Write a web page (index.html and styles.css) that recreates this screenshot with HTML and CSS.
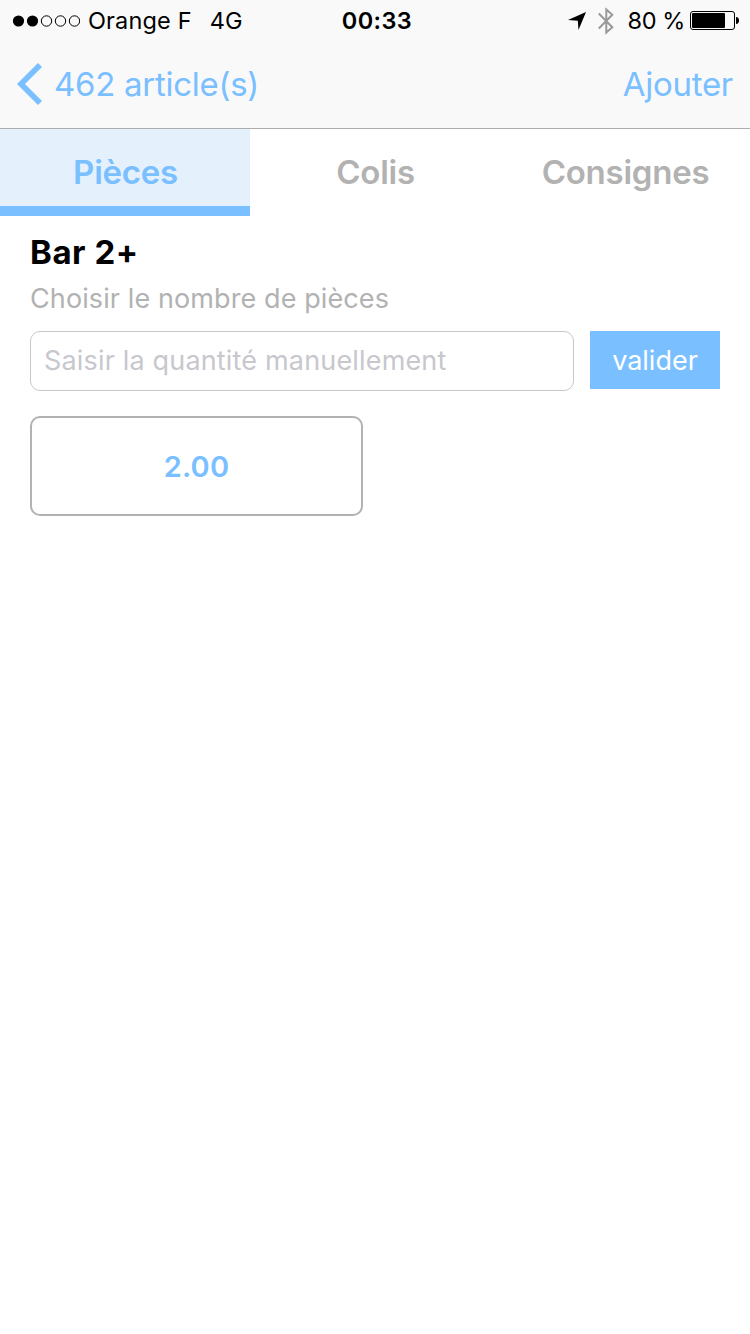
FILE: index.html
```html
<!DOCTYPE html>
<html lang="fr">
<head>
    <meta charset="UTF-8">
    <meta name="viewport" content="width=device-width, initial-scale=1.0">
    <title>Bar 2+</title>
    <link rel="stylesheet" href="styles.css">
</head>
<body>
    <header>
        <div class="status">
            <div class="status-left">
                <svg class="signal" width="68" height="12" viewBox="0 0 68 12">
                    <circle cx="6.5" cy="6" r="5.6"/>
                    <circle cx="20.5" cy="6" r="5.6"/>
                    <g fill="none" stroke="#000" stroke-width="1">
                        <circle cx="34.5" cy="6" r="5.2"/>
                        <circle cx="48.5" cy="6" r="5.2"/>
                        <circle cx="62.5" cy="6" r="5.2"/>
                    </g>
                </svg>
                <span class="operateur">Orange F</span>
                <span class="reseau">4G</span>
            </div>
            <div class="heure">00:33</div>
            <div class="status-right">
                <svg class="location" width="18" height="18" viewBox="0 0 18 18">
                    <path d="M18 0L10.5 18L9.8 8.8L0 8Z"/>
                </svg>
                <svg class="bluetooth" width="16" height="28" viewBox="0 0 16 28">
                    <path d="M0.8 6.5L14.3 20.3L8.3 25.5V2.5L14.3 7.7L0.8 21.5" fill="none" stroke="#999" stroke-width="2"/>
                </svg>
                <span class="pourcentage">80 %</span>
                <svg class="batterie" width="49" height="19" viewBox="0 0 49 19">
                    <rect x="0.5" y="0.5" width="44" height="18" rx="2.5" fill="none" stroke="#000"/>
                    <rect x="2" y="2" width="33" height="15" rx="1"/>
                    <path d="M46 6C48 6 49 7.5 49 9.5S48 13 46 13Z"/>
                </svg>
            </div>
        </div>

        <nav>
            <a href="#" class="retour">
                <svg width="26" height="42" viewBox="0 0 26 42">
                    <path d="M21 0L25 4L8 21L25 38L21 42L0 21Z" fill="#7abfff"/>
                </svg>
                <span>462 article(s)</span>
            </a>
            <a href="#" class="ajouter">Ajouter</a>
        </nav>
    </header>

    <div class="onglets">
        <a href="#" class="onglet actif">Pièces</a>
        <a href="#" class="onglet">Colis</a>
        <a href="#" class="onglet">Consignes</a>
    </div>

    <section>
        <h1>Bar 2+</h1>
        <p>Choisir le nombre de pièces</p>

        <form class="saisie">
            <input type="text" name="quantite" placeholder="Saisir la quantité manuellement">
            <button type="submit">valider</button>
        </form>

        <div class="choix">2.00</div>
    </section>
</body>
</html>
```

FILE: styles.css
```css
body {
    font-family: Inter, "Liberation Sans", sans-serif;
    margin: 0;
    background-color: #fff;
    color: #000;
    min-height: 100vh;
}

a {
    color: #7abfff;
    text-decoration: none;
}

svg {
    flex: none;
}

span {
    white-space: nowrap;
}

header {
    height: 128px;
    background-color: #f9f9f9;
    border-bottom: 1px solid #adadad;
}

/* Barre de statut */
.status {
    display: grid;
    grid-template-columns: 1fr auto 1fr;
    align-items: center;
    height: 41px;
    padding: 0 11px 0 12px;
    font-size: 23.5px;
    line-height: 41px;
}

.status-left,
.status-right {
    display: flex;
    align-items: center;
}

.status-right {
    justify-content: flex-end;
}

.operateur {
    margin-left: 8px;
    letter-spacing: 0.15px;
}

.reseau {
    margin-left: 18px;
}

.heure {
    padding-left: 3px;
    font-weight: 600;
    letter-spacing: 0.4px;
}

.bluetooth {
    margin-left: 12px;
}

.pourcentage {
    margin-left: 14px;
    letter-spacing: -0.4px;
}

.batterie {
    margin-left: 5px;
    margin-bottom: 1px;
}

/* Barre de navigation */
nav {
    display: flex;
    justify-content: space-between;
    align-items: center;
    height: 86px;
    padding: 0 17px;
    font-size: 33px;
    letter-spacing: -0.28px;
}

.retour {
    display: flex;
    align-items: center;
    gap: 11px;
}

/* Onglets */
.onglets {
    display: grid;
    grid-template-columns: repeat(3, 1fr);
    height: 87px;
}

.onglet {
    box-sizing: border-box;
    border-bottom: 10px solid transparent;
    color: #b2b2b2;
    font-size: 33px;
    font-weight: 600;
    letter-spacing: -0.25px;
    line-height: 86px;
    height: 87px;
    padding-left: 1px;
    text-align: center;
}

.onglet.actif {
    background-color: #e4f1fd;
    border-bottom-color: #7abfff;
    color: #7abfff;
}

/* Contenu */
section {
    padding: 16px 30px;
}

h1 {
    margin: 0;
    font-size: 33px;
    line-height: 41px;
    font-weight: 700;
    letter-spacing: 0.55px;
}

p {
    margin: 9px 0 15px;
    font-size: 27px;
    line-height: 34px;
    letter-spacing: 0.1px;
    color: #b2b2b2;
}

.saisie {
    display: flex;
    align-items: flex-start;
    gap: 16px;
}

input {
    box-sizing: border-box;
    flex: 1;
    min-width: 0;
    height: 60px;
    padding: 0 13px 2px;
    border: 1px solid #c8c8c8;
    border-radius: 10px;
    font-family: inherit;
    font-size: 27px;
    letter-spacing: 0.17px;
}

input::placeholder {
    color: #c7c7cd;
}

button {
    width: 130px;
    height: 58px;
    padding: 1px 0 0;
    border: none;
    background-color: #7abfff;
    color: #fff;
    font-family: inherit;
    font-size: 27px;
}

.choix {
    box-sizing: border-box;
    width: 333px;
    height: 100px;
    margin-top: 25px;
    border: 2px solid #b2b2b2;
    border-radius: 10px;
    color: #7abfff;
    font-size: 29px;
    font-weight: 600;
    letter-spacing: 0.2px;
    line-height: 97px;
    text-align: center;
}
```
